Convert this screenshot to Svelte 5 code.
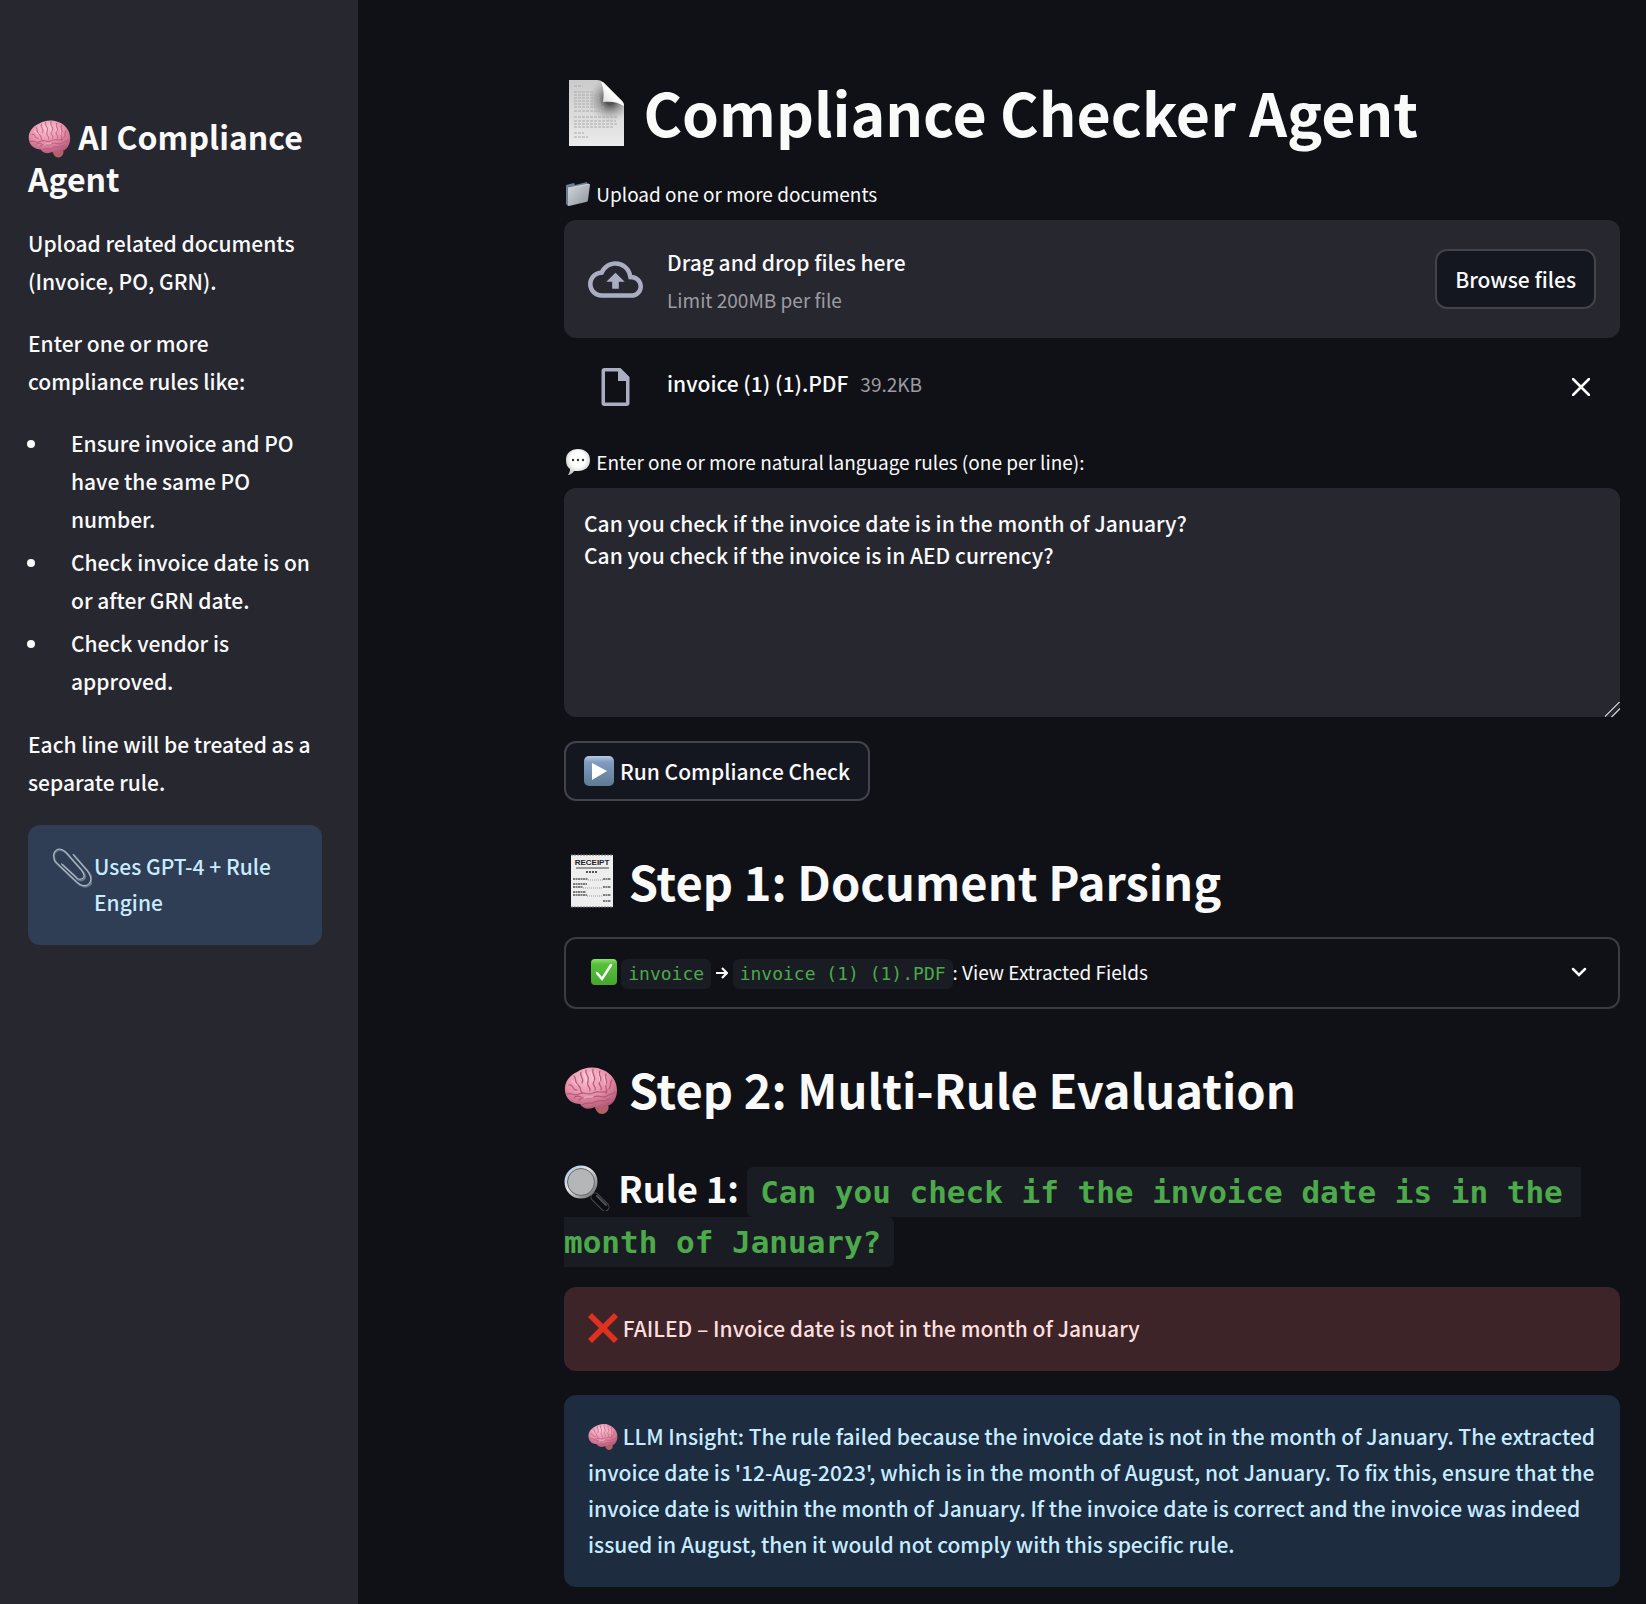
<script>
  let rules = $state(
    'Can you check if the invoice date is in the month of January?\nCan you check if the invoice is in AED currency?'
  );
  let picker;
  const tips = [
    'Ensure invoice and PO have the same PO number.',
    'Check invoice date is on or after GRN date.',
    'Check vendor is approved.'
  ];
</script>

{#snippet brain()}
  <svg class="icon" viewBox="0 -2 54 54" aria-hidden="true">
    <defs>
      <radialGradient id="brainFill" cx="0.42" cy="0.25" r="0.8">
        <stop offset="0" stop-color="#f9c0d0" />
        <stop offset="0.55" stop-color="#e68fa9" />
        <stop offset="1" stop-color="#ad5472" />
      </radialGradient>
    </defs>
    <path d="M30 41c4-3 11-3 14 0 2 3-1 9-6 9-4 0-6-3-8-9z" fill="#b2606a" />
    <path d="M1 27C0 18 6 11 13 8c7-5 18-6 26-2 8 3 14 11 14 20 0 8-4 15-10 16-6 1-8 0-12 1-6 3-12 2-15-3C9 40 2 36 1 27z" fill="url(#brainFill)" />
    <g fill="none" stroke="#b9577a" stroke-width="1.2" stroke-linecap="round">
      <path d="M5 21c5-1 3 6 8 5M10 12c3 3 0 6 4 9s1 7 5 8M17 8c-2 5 4 6 1 11M22 6c-1 6 4 5 2 11s3 6 2 10M29 5c-2 6 4 7 1 12s3 5 1 9M36 7c-3 4 3 6 0 10s3 5 1 9M42 10c-2 4 2 6 0 10s3 6 0 9M48 16c-3 3 0 6-3 9M3 30c6-2 6 3 12 0s8 2 14-1 9 1 14-2" />
      <path d="M15 36c5-5 10 0 15-3s9 2 13-1 6-1 8-4M18 41c5-4 9 0 13-3s10 1 14-3M10 34c2-3 5-2 7-1" />
    </g>
    <g fill="none" stroke="#ffdbe4" stroke-width="1" stroke-linecap="round" opacity="0.8">
      <path d="M8 17c3 0 2 4 5 4M20 9c0 4 3 5 2 9M27 8c0 5 3 5 2 9M34 9c0 4 3 5 1 9M40 13c0 3 2 5 1 8M20 34c4-2 6 0 9-1" />
    </g>
  </svg>
{/snippet}

<div class="app">
  <aside class="sidebar">
    <h2>{@render brain()} AI Compliance Agent</h2>
    <p>Upload related documents (Invoice, PO, GRN).</p>
    <p>Enter one or more compliance rules like:</p>
    <ul>
      {#each tips as tip}
        <li>{tip}</li>
      {/each}
    </ul>
    <p>Each line will be treated as a separate rule.</p>
    <div class="note">
      <svg class="clip" viewBox="0 0 38 38" aria-hidden="true">
        <g fill="none" stroke-linecap="round" stroke-width="2">
          <path d="M21 7l13 15c4 5 5 10 2 13s-8 2-12-2L4 14C1 10 1 5 4 3s7-1 10 2l15 17c3 4 3 7 1 8s-5 1-7-2L10 16" stroke="#6d7887" />
          <path d="M20 6l13 15c4 5 5 10 2 13s-8 2-12-2L3 13C1 9 1 4 4 2s6-1 9 2l15 17c3 4 3 7 1 8s-5 1-7-2L9 15" stroke="#adbac9" stroke-width="1" />
        </g>
      </svg>
      <span>Uses GPT-4 + Rule Engine</span>
    </div>
  </aside>

  <main>
    <h1>
      <svg class="icon" viewBox="0 0 66 66" aria-hidden="true">
        <defs>
          <linearGradient id="paper" x1="0" y1="0" x2="0" y2="1">
            <stop offset="0" stop-color="#cbcbcb" />
            <stop offset="1" stop-color="#ebebeb" />
          </linearGradient>
          <linearGradient id="fold" x1="0" y1="1" x2="1" y2="0">
            <stop offset="0" stop-color="#d0d0d0" />
            <stop offset="0.5" stop-color="#ffffff" />
            <stop offset="1" stop-color="#c4c4c4" />
          </linearGradient>
          <radialGradient id="foldShade" cx="46" cy="20" r="22" gradientUnits="userSpaceOnUse">
            <stop offset="0.2" stop-color="#333" stop-opacity="0.8" />
            <stop offset="1" stop-color="#999" stop-opacity="0" />
          </radialGradient>
        </defs>
        <path d="M5 0h28c3 0 5 1 7 3l18 18c2 2 2 4 2 7v38H5z" fill="url(#paper)" />
        <path d="M28 0h5c3 0 5 1 7 3l18 18c2 2 2 4 2 7v14H24z" fill="url(#foldShade)" />
        <path d="M37 2c3 6 3 13 2 20 8-1 15 0 21 4 0-2-1-4-2-5L40 3c-1-1-2-1-3-1z" fill="url(#fold)" />
        <path d="M10 6h9M10 12h20M10 15h24M10 18h26M10 21h26M10 24h28M10 27h30M10 31h26M10 37h44M10 41h42M10 44h44M10 47h40M10 53h10M10 57h14" stroke="#aaa" stroke-width="1" stroke-dasharray="3 1" />
      </svg>
      Compliance Checker Agent
    </h1>

    <section>
      <label class="field-label" for="files">
        <svg class="icon" viewBox="0 0 26 26" aria-hidden="true">
          <defs>
            <linearGradient id="folder" x1="0" y1="0" x2="1" y2="1">
              <stop offset="0" stop-color="#d3d8dc" />
              <stop offset="1" stop-color="#8b949c" />
            </linearGradient>
          </defs>
          <path d="M2 4l8-2 1 2 12-3 1 3L4 25 2 23z" fill="#6d7d8b" />
          <path d="M5 7l20-4c1 0 1 0 1 1l-2 15c0 1-1 2-2 2L5 25c-1 0-1 0-1-1V8c0-1 0-1 1-1z" fill="url(#folder)" />
          <path d="M4 7l21-4" stroke="#e8edf0" stroke-width="0.7" />
        </svg>
        Upload one or more documents
      </label>
      <div class="dropzone">
        <svg class="cloud" viewBox="0 0 24 24" aria-hidden="true">
          <path fill="currentColor" d="M19.35 10.04C18.67 6.59 15.64 4 12 4 9.11 4 6.6 5.64 5.35 8.04 2.34 8.36 0 10.91 0 14c0 3.31 2.69 6 6 6h13c2.76 0 5-2.24 5-5 0-2.64-2.05-4.78-4.65-4.96zM19 18H6c-2.21 0-4-1.79-4-4 0-2.05 1.53-3.76 3.56-3.97l1.07-.11.5-.95C8.08 7.14 9.94 6 12 6c2.62 0 4.88 1.86 5.39 4.43l.3 1.5 1.53.11c1.56.1 2.78 1.41 2.78 2.96 0 1.65-1.35 3-3 3zM8 13h2.55v3h2.9v-3H16l-4-4z" />
        </svg>
        <div class="drop-text">
          <span>Drag and drop files here</span>
          <small>Limit 200MB per file</small>
        </div>
        <input id="files" type="file" multiple hidden bind:this={picker} />
        <button type="button" class="btn" onclick={() => picker.click()}>Browse files</button>
      </div>
      <div class="file">
        <svg class="doc" viewBox="0 0 28 38" aria-hidden="true">
          <path fill="currentColor" fill-rule="evenodd" d="M3 0h16l9 9v26c0 2-1 3-3 3H3c-2 0-3-1-3-3V3c0-2 1-3 3-3zm0.500 3.500v31h21V13h-8V3.500z" />
        </svg>
        <div class="file-text">
          <span>invoice (1) (1).PDF</span>
          <small>39.2KB</small>
        </div>
        <button type="button" class="close" aria-label="Remove file">
          <svg viewBox="0 0 18 18" aria-hidden="true"><path d="M1 1l16 16M17 1L1 17" stroke="currentColor" stroke-width="2.500" stroke-linecap="round" /></svg>
        </button>
      </div>
    </section>

    <section>
      <label class="field-label" for="rules">
        <svg class="icon" viewBox="0 0 26 26" aria-hidden="true">
          <defs>
            <radialGradient id="bubble" cx="0.5" cy="0.4" r="0.6">
              <stop offset="0.5" stop-color="#ffffff" />
              <stop offset="1" stop-color="#c4c4c4" />
            </radialGradient>
          </defs>
          <path d="M14 0c7 0 12 4 12 11s-5 11-12 11h-4c-1 2-4 4-6 4 1-2 2-3 2-6-3-2-4-5-4-9C2 4 7 0 14 0z" fill="url(#bubble)" />
          <g fill="#333"><circle cx="9" cy="11" r="1.200" /><circle cx="14" cy="11" r="1.200" /><circle cx="19" cy="11" r="1.200" /></g>
        </svg>
        Enter one or more natural language rules (one per line):
      </label>
      <textarea id="rules" bind:value={rules} spellcheck="false"></textarea>
    </section>

    <button type="button" class="btn run">
      <svg class="icon" viewBox="0 0 30 30" aria-hidden="true">
        <defs>
          <linearGradient id="play" x1="0" y1="0" x2="0" y2="1">
            <stop offset="0" stop-color="#b7cbe3" />
            <stop offset="0.2" stop-color="#809dc2" />
            <stop offset="1" stop-color="#5f7993" />
          </linearGradient>
        </defs>
        <rect width="30" height="30" rx="5" fill="url(#play)" />
        <path d="M8 7l15 8-15 9z" fill="#fff" />
      </svg>
      Run Compliance Check
    </button>

    <h2 class="step">
      <svg class="icon" viewBox="0 0 54 54" aria-hidden="true">
        <rect x="7" y="1" width="42" height="52" fill="#eeeeee" />
        <path d="M7 1h42M7 53h42" stroke="#777" stroke-width="1" stroke-dasharray="2 1" />
        <text x="28" y="11" text-anchor="middle" class="receipt-title">RECEIPT</text>
        <path d="M12 14h33" stroke="#999" stroke-width="2" />
        <path d="M22 18h11" stroke="#555" stroke-width="2" stroke-dasharray="2 1" />
        <g stroke="#555" stroke-width="1.500" stroke-dasharray="2 0.500"><path d="M9 25h15M9 30h14M9 33h10M9 38h13M9 41h14M39 25h8M39 33h8M39 41h8M39 47h8" /></g>
        <path d="M24 26h15M19 34h20M23 42h16" stroke="#999" stroke-width="1" stroke-dasharray="1 1" />
      </svg>
      Step 1: Document Parsing
    </h2>

    <details class="expander">
      <summary>
        <span class="summary-text">
          <svg class="icon" viewBox="0 0 26 26" aria-hidden="true">
            <defs>
              <linearGradient id="tick" x1="0" y1="0" x2="0" y2="1">
                <stop offset="0" stop-color="#91e070" />
                <stop offset="0.2" stop-color="#55c23a" />
                <stop offset="1" stop-color="#46a62e" />
              </linearGradient>
            </defs>
            <rect width="26" height="26" rx="4" fill="url(#tick)" />
            <path d="M6 14l5 6L20 6" fill="none" stroke="#fff" stroke-width="2.500" stroke-linecap="round" />
          </svg>
          <code>invoice</code>
          <svg class="arrow" viewBox="0 0 13 14" role="img" aria-label="to"><path d="M1 7h10M7 2l5 5-5 5" fill="none" stroke="currentColor" stroke-width="2.200" /></svg>
          <code>invoice (1) (1).PDF</code>: View Extracted Fields
        </span>
        <svg class="chevron" viewBox="0 0 16 10" aria-hidden="true"><path d="M2 2l6 6 6-6" fill="none" stroke="currentColor" stroke-width="2.500" stroke-linecap="round" /></svg>
      </summary>
    </details>

    <h2 class="step">{@render brain()} Step 2: Multi-Rule Evaluation</h2>

    <h3>
      <svg class="icon" viewBox="0 0 46 46" aria-hidden="true">
        <defs>
          <linearGradient id="rim" x1="0" y1="0" x2="1" y2="1">
            <stop offset="0" stop-color="#9fc3e6" />
            <stop offset="0.4" stop-color="#e6e6e6" />
            <stop offset="1" stop-color="#666" />
          </linearGradient>
        </defs>
        <path d="M26 27l6 6" stroke="#777" stroke-width="4" />
        <path d="M31 32l10 10" stroke="#4a4d52" stroke-width="9" stroke-linecap="round" />
        <path d="M31 32l10 10" stroke="#0c0d0f" stroke-width="7" stroke-linecap="round" />
        <path d="M33 31l9 9" stroke="#4d5157" stroke-width="2" stroke-linecap="round" />
        <circle cx="17" cy="17" r="15" fill="#b5b6b8" stroke="url(#rim)" stroke-width="3" />
        <circle cx="17" cy="17" r="13.500" fill="none" stroke="#666" stroke-width="1" />
      </svg>
      Rule 1: <code>Can you check if the invoice date is in the month of January?</code>
    </h3>

    <div class="alert failed" role="alert">
      <svg class="icon" viewBox="0 0 30 30" aria-hidden="true"><path d="M4 0l11 11L26 0l4 4-11 11 11 11-4 4-11-11L4 30l-4-4 11-11L0 4z" fill="#e0301f" /></svg>
      FAILED – Invoice date is not in the month of January
    </div>

    <div class="alert insight">
      {@render brain()}
      LLM Insight: The rule failed because the invoice date is not in the month of January. The extracted invoice date is '12-Aug-2023', which is in the month of August, not January. To fix this, ensure that the invoice date is within the month of January. If the invoice date is correct and the invoice was indeed issued in August, then it would not comply with this specific rule.
    </div>
  </main>
</div>

<style>
  :global(body) {
    background: #101116;
  }

  .app {
    display: flex;
    min-height: 100vh;
    box-sizing: border-box;
    color: #fafafa;
    font-family: 'Noto Sans CJK JP', 'Noto Sans', sans-serif;
    font-size: 21px;
    font-weight: 500;
    line-height: 36px;
  }

  .sidebar {
    flex: 0 0 358px;
    box-sizing: border-box;
    padding: 115px 36px 28px 28px;
    background: #272730;
    line-height: 38px;
  }

  .sidebar h2 {
    margin: 0 0 25px;
    font-size: 32px;
    line-height: 42px;
  }

  .sidebar p {
    margin: 0 0 24px;
  }

  .sidebar ul {
    display: flex;
    flex-direction: column;
    gap: 5px;
    margin: 0 0 25px;
    padding: 0 0 0 43px;
    list-style: none;
  }

  .sidebar li {
    position: relative;
  }

  .sidebar li::before {
    content: '';
    position: absolute;
    left: -44px;
    top: 16px;
    width: 8px;
    height: 8px;
    border-radius: 50%;
    background: #fafafa;
  }

  .note {
    display: flex;
    padding: 23px 24px 25px;
    border-radius: 12px;
    background: #2f3d55;
    color: #c7ebff;
    line-height: 36px;
  }

  .clip {
    flex: none;
    width: 40px;
    height: 40px;
    margin-right: 2px;
  }

  main {
    flex: 1;
    min-width: 0;
    padding: 72px 26px 17px 206px;
  }

  /* Negative block margins keep inline icons from stretching their line. */
  .icon {
    width: 30px;
    height: 30px;
    margin: -12px 0;
    vertical-align: 6px;
  }

  h1,
  h2,
  h3 {
    font-weight: 700;
  }

  h1 {
    margin: 0 0 24px;
    font-size: 59px;
    line-height: 80px;
  }

  h1 .icon {
    width: 66px;
    height: 66px;
    vertical-align: 3px;
  }

  .sidebar h2 .icon {
    width: 43px;
    height: 43px;
    vertical-align: 3px;
  }

  .step {
    margin: 50px 0 26px;
    font-size: 47px;
    line-height: 60px;
  }

  .step .icon {
    width: 54px;
    height: 54px;
    vertical-align: 5px;
  }

  .step + h3 {
    margin: 43px 0 25px;
    font-size: 36px;
    line-height: 50px;
  }

  h3 .icon {
    width: 46px;
    height: 46px;
    vertical-align: 4px;
  }

  .field-label {
    display: block;
    margin-bottom: 8px;
    font-size: 19px;
    font-weight: 400;
    line-height: 36px;
  }

  .field-label .icon {
    width: 26px;
    height: 26px;
    margin-right: 2px;
    vertical-align: 7px;
  }

  .dropzone {
    display: flex;
    align-items: center;
    gap: 24px;
    padding: 22px 24px;
    border-radius: 12px;
    background: #272730;
  }

  .cloud {
    flex: none;
    width: 55px;
    height: 55px;
    color: #abaec2;
  }

  .drop-text {
    display: flex;
    flex: 1;
    flex-direction: column;
    gap: 4px;
    padding-top: 4px;
    line-height: 33px;
  }

  small {
    color: #9c9ca1;
    font-size: 19px;
    font-weight: 400;
  }

  .btn {
    display: flex;
    align-items: center;
    gap: 6px;
    height: 60px;
    padding: 0 18px 1px;
    border: 2px solid #42434b;
    border-radius: 12px;
    background: #141720;
    color: inherit;
    font: inherit;
  }

  .file {
    display: flex;
    align-items: center;
    gap: 37px;
    padding: 29px 30px 38px 37px;
  }

  .doc {
    flex: none;
    width: 29px;
    height: 38px;
    color: #abaec2;
  }

  .file-text {
    display: flex;
    flex: 1;
    align-items: baseline;
    gap: 12px;
    padding-bottom: 6px;
    line-height: 32px;
  }

  .close {
    display: flex;
    padding: 0;
    border: 0;
    background: none;
    color: inherit;
  }

  .close svg {
    width: 18px;
    height: 18px;
  }

  textarea {
    display: block;
    box-sizing: border-box;
    width: 100%;
    height: 229px;
    margin-bottom: 24px;
    padding: 19px 20px;
    border: 0;
    border-radius: 12px;
    outline: 0;
    background: #272730;
    color: inherit;
    font: inherit;
    line-height: 32px;
    resize: vertical;
    color-scheme: dark;
  }

  textarea::-webkit-resizer {
    background: linear-gradient(
      135deg,
      transparent 44%,
      #b5b5b8 46%,
      #b5b5b8 51%,
      transparent 53%,
      transparent 68%,
      #b5b5b8 70%,
      #b5b5b8 75%,
      transparent 77%
    );
  }

  .receipt-title {
    font-family: 'Liberation Sans', sans-serif;
    font-size: 8px;
    font-weight: 700;
    fill: #222;
  }

  code {
    padding: 4px 7px 5px;
    border-radius: 6px;
    background: #1a1c23;
    color: #4caa4b;
    font-family: 'DejaVu Sans Mono', monospace;
    font-weight: 400;
    line-height: 1;
  }

  h3 code {
    padding: 7px 13px;
    font-size: 31px;
    font-weight: 700;
    white-space: break-spaces;
  }

  .expander {
    border: 2px solid #3b3c42;
    border-radius: 12px;
    font-size: 19px;
    font-weight: 400;
  }

  summary {
    display: flex;
    align-items: center;
    justify-content: space-between;
    padding: 15px 31px 17px 25px;
    list-style: none;
  }

  .expander code {
    font-size: 18px;
  }

  .expander .icon {
    width: 26px;
    height: 26px;
    vertical-align: 7px;
  }

  .arrow {
    width: 13px;
    height: 14px;
  }

  .chevron {
    width: 16px;
    height: 10px;
  }

  .alert {
    padding: 23px 24px 25px;
    border-radius: 12px;
  }

  .failed {
    margin-bottom: 24px;
    background: #3c2428;
    color: #ffdede;
  }

  .insight {
    background: #1e2c3f;
    color: #c7ebff;
  }
</style>
